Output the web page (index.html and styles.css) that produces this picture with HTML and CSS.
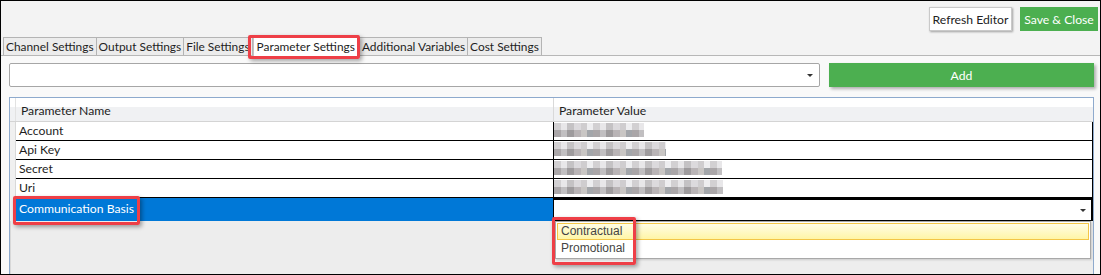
FILE: index.html
```html
<!DOCTYPE html>
<html>
<head>
	<title>Parameter Settings</title>
	<meta charset="utf-8">
	<link rel="stylesheet" href="styles.css">
</head>
<body>
<div id="editor">
	<div class="toolbar">
		<button class="btn-refresh">Refresh Editor</button>
		<button class="btn-save">Save &amp; Close</button>
	</div>
	<ul class="tabs">
		<li>Channel Settings</li>
		<li>Output Settings</li>
		<li>File Settings</li>
		<li class="active">Parameter Settings</li>
		<li>Additional Variables</li>
		<li>Cost Settings</li>
	</ul>
	<div class="panel">
		<div class="addrow">
			<div class="combo"><span class="arrow"></span></div>
			<button class="btn-add">Add</button>
		</div>
		<div class="grid">
			<div class="row head">
				<div class="strip"></div>
				<div class="cell name">Parameter Name</div>
				<div class="cell value">Parameter Value</div>
			</div>
			<div class="row">
				<div class="strip"></div>
				<div class="cell name">Account</div>
				<div class="cell value"><span class="blur w1"></span></div>
			</div>
			<div class="row">
				<div class="strip"></div>
				<div class="cell name">Api Key</div>
				<div class="cell value"><span class="blur w2"></span></div>
			</div>
			<div class="row">
				<div class="strip"></div>
				<div class="cell name">Secret</div>
				<div class="cell value"><span class="blur w3"></span></div>
			</div>
			<div class="row">
				<div class="strip"></div>
				<div class="cell name">Uri</div>
				<div class="cell value"><span class="blur w4"></span></div>
			</div>
			<div class="row selected">
				<div class="strip"></div>
				<div class="cell name">Communication Basis</div>
				<div class="cell value">
					<div class="cell-editor"><span class="arrow"></span></div>
					<ul class="popup">
						<li class="hot">Contractual</li>
						<li>Promotional</li>
					</ul>
				</div>
			</div>
			<div class="filler"></div>
		</div>
	</div>

	<!-- red callouts from the screenshot -->
	<div class="mark mark-tab"></div>
	<div class="mark mark-row"></div>
	<div class="mark mark-list"></div>
</div>
</body>
</html>
```

FILE: styles.css
```css
* {
	box-sizing:border-box;
}
body {
	margin:0;
	font-family:Lato, "Liberation Sans", sans-serif;
	font-size:12.2px;
	color:#1e1e1e;
}
ul {
	list-style:none;
	margin:0;
	padding:0;
}
button {
	font-family:inherit;
	font-size:12.2px;
	cursor:pointer;
}
#editor {
	position:relative;
	width:1101px;
	height:275px;
	border:solid 1px #000;
	background:#f3f3f3;
	display:flex;
	flex-direction:column;
	overflow:hidden;
}
.toolbar {
	display:flex;
	justify-content:flex-end;
	gap:8px;
	padding:6px 2px 6px 0;
}
.toolbar button {
	height:24px;
	padding:0;
}
.btn-refresh {
	width:83px;
	background:#fff;
	color:#222;
	border:solid 1px #c9c9c9;
	box-shadow:1px 1px 2px rgba(0,0,0,.35);
}
.btn-save {
	width:78px;
	background:#4caf50;
	color:#fff;
	border:none;
}
.tabs {
	display:flex;
	align-items:flex-end;
	height:19px;
	padding-left:2px;
	border-bottom:solid 1px #b7b7b7;
	font-size:11.9px;
}
.tabs li {
	height:18px;
	line-height:17px;
	padding:0 2px;
	background:#ececec;
	border:solid 1px #b4b4b4;
	border-bottom:none;
	margin-right:-1px;
	white-space:nowrap;
}
.tabs li.active {
	position:relative;
	height:21px;
	margin:0 0 -1px 1px;
	padding:2px 3px 0;
	background:#fff;
	border-color:#c4c4c4;
	z-index:1;
}
.panel {
	flex:1;
	display:flex;
	flex-direction:column;
	padding:7px 6px 0 8px;
	background:#f9f9f9;
}
.addrow {
	display:flex;
	gap:9px;
	height:24px;
}
.combo {
	position:relative;
	flex:1;
	background:#fff;
	border:solid 1px #a6a6a6;
	border-radius:2px;
}
.combo .arrow {
	right:6px;
	top:10px;
}
.arrow {
	position:absolute;
	width:0;
	height:0;
	border-left:3px solid transparent;
	border-right:3px solid transparent;
	border-top:3px solid #333;
}
.btn-add {
	width:265px;
	background:#4caf50;
	color:#fff;
	border:none;
	box-shadow:2px 2px 3px rgba(0,0,0,.3);
}
.grid {
	flex:1;
	display:flex;
	flex-direction:column;
	margin-top:10px;
	border:solid 1px #8eaacd;
	border-bottom:none;
	background:#fff;
}
.row {
	display:flex;
	height:19px;
}
.strip {
	width:6px;
	background:#f0f0f0;
	border-right:solid 1px #d8d8d8;
}
.cell {
	border-bottom:solid 1px #000;
	line-height:18px;
	white-space:nowrap;
}
.cell.name {
	width:537px;
	padding-left:3px;
}
.cell.value {
	position:relative;
	flex:1;
	border-left:solid 1px #000;
	border-right:solid 1px #000;
	padding-left:0;
}
.row.head {
	height:24px;
	background:linear-gradient(#fff 40%, #f0f1f3 41%);
	border-bottom:solid 1px #d4d4d4;
}
.row.head .strip {
	background:transparent;
	border-right:solid 1px #e2e2e2;
}
.row.head .cell {
	border:none;
	line-height:25px;
	padding-left:5px;
}
.row.head .cell.value {
	border-left:solid 1px #d9d9d9;
}
.blur {
	display:block;
	height:14px;
	margin-top:1px;
	background:
		repeating-linear-gradient(90deg, #d2d0d2 0 7px, #e8e7e9 7px 13px, #c4c2c4 13px 20px, #dcdadd 20px 27px, #cfcdcf 27px 33px, #eeeef0 33px 39px) top / 100% 7px no-repeat,
		repeating-linear-gradient(90deg, #aaa6a8 0 7px, #c1bfc1 7px 13px, #9e9b9d 13px 20px, #b9b4b6 20px 27px, #c9c6c4 27px 33px, #a3a6aa 33px 39px) bottom / 100% 7px no-repeat;
}
.blur.w1 { width:90px; }
.blur.w2 { width:112px; }
.blur.w3 { width:168px; }
.blur.w4 { width:169px; }
.row.selected {
	height:23px;
}
.row.selected .cell {
	border-bottom:none;
	line-height:22px;
}
.row.selected .cell.name {
	background:#0078d7;
	color:#fff;
	padding-left:3px;
}
.row.selected .cell.value {
	border:none;
}
.cell-editor {
	position:relative;
	height:23px;
	background:#fff;
	border:solid 1px #000;
	border-top-width:2px;
	border-right-width:2px;
}
.cell-editor .arrow {
	right:5px;
	top:9px;
}
.popup {
	position:absolute;
	top:23px;
	left:2px;
	right:2px;
	height:38px;
	padding:1px;
	background:#fff;
	border:solid 1px #a8a8a8;
	box-shadow:1px 1px 2px rgba(0,0,0,.15);
	font-family:"Liberation Sans", Arial, sans-serif;
	font-size:12px;
	color:#444;
	z-index:2;
}
.popup li {
	height:17px;
	line-height:15px;
	padding-left:3px;
	border:solid 1px transparent;
}
.popup li.hot {
	background:linear-gradient(#fffde6, #fff5a6);
	border-color:#f3c647;
}
.filler {
	flex:1;
	background:#ededed;
	border-left:solid 1px #d8d8d8;
}
.mark {
	position:absolute;
	border:solid 3px #ee3f47;
	border-radius:2px;
	box-shadow:2px 2px 4px rgba(0,0,0,.35);
	z-index:5;
}
.mark-tab {
	left:247px;
	top:34px;
	width:112px;
	height:24px;
}
.mark-row {
	left:12px;
	top:195px;
	width:127px;
	height:29px;
}
.mark-list {
	left:551px;
	top:216px;
	width:84px;
	height:48px;
}
```
